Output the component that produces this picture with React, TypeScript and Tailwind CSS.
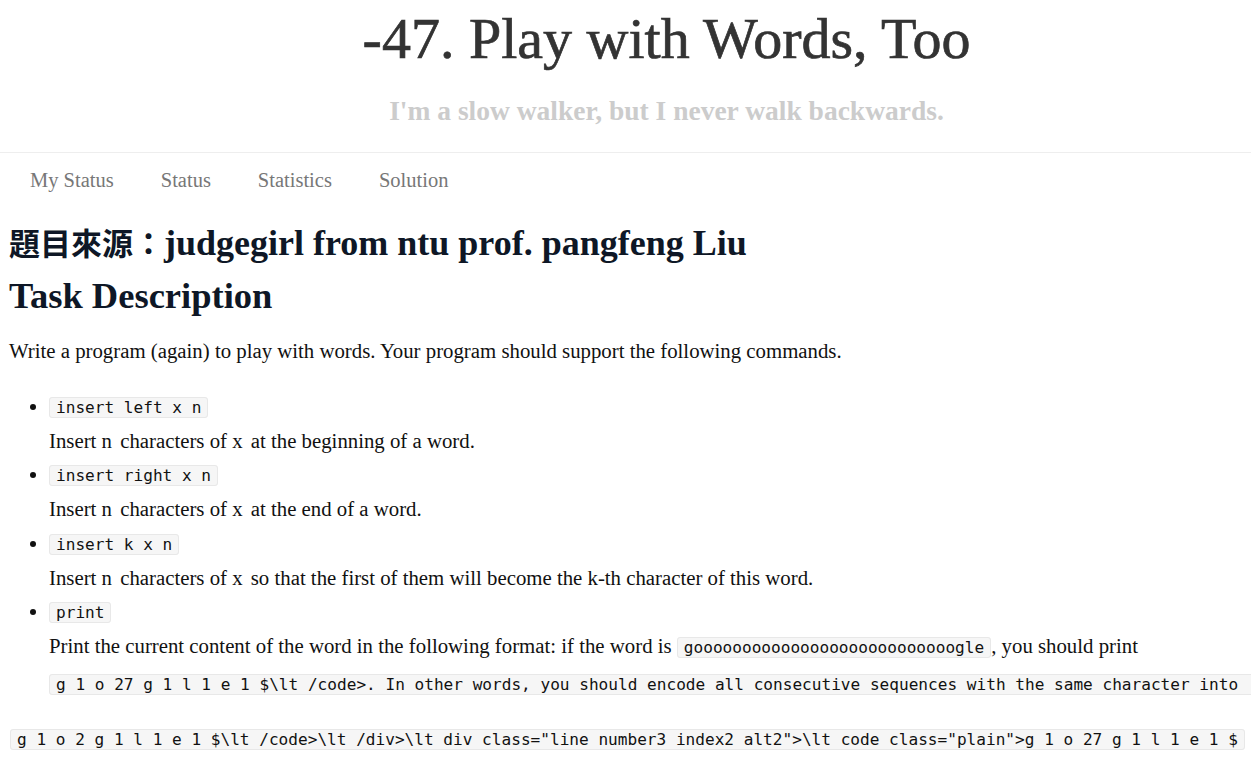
import React from "react";

const Code = ({ children }: { children: React.ReactNode }) => (
  <code className="whitespace-pre rounded-[3px] border border-[#e8e8e8] bg-[#f6f6f6] px-[6px] font-['DejaVu_Sans_Mono',monospace] text-[16.1px] text-[#111]">
    {children}
  </code>
);

const V = ({ children }: { children: React.ReactNode }) => (
  <span className="mr-[3px]">{children}</span>
);

const google = "g" + "o".repeat(27) + "gle";

export default function App() {
  return (
    <div className="h-[759px] w-[1251px] overflow-hidden bg-white font-['Liberation_Serif','Noto_Sans_CJK_TC',serif] text-[#111]">
      <header className="pl-[82px] text-center">
        <h1 className="pt-[10px] text-[58px] leading-[58px] text-[#333] [-webkit-text-stroke:0.7px_#333]">
          -47. Play with Words, Too
        </h1>
        <p className="mt-[29px] text-[27.5px] font-bold leading-[27.5px] text-[#ccc]">
          I'm a slow walker, but I never walk backwards.
        </p>
      </header>
      <div className="mt-[27px] h-px bg-[#eee]" />
      <nav className="flex gap-[47px] pl-[30px] pt-[17px] text-[20.5px] leading-[20.5px] text-[#777]">
        <span>My Status</span>
        <span>Status</span>
        <span>Statistics</span>
        <span>Solution</span>
      </nav>
      <main className="px-[9px]">
        <h2 className="mt-[35px] h-[36px] whitespace-nowrap text-[36px] font-bold leading-[36px] text-[#0e1726]">
          <span className="font-['Noto_Sans_CJK_TC',sans-serif] text-[31px] leading-[0px]">題目來源：</span>
          judgegirl from ntu prof. pangfeng Liu
        </h2>
        <h2 className="mt-[17px] h-[36px] text-[36.5px] font-bold leading-[36px] text-[#0e1726]">Task Description</h2>
        <p className="mt-[27px] text-[20.8px] leading-[20.8px]">
          Write a program (again) to play with words. Your program should support the following commands.
        </p>
        <ul className="mt-[27px] list-disc pl-[40px] text-[20.8px] leading-[34px]">
          <li>
            <div>
              <Code>insert left x n</Code>
            </div>
            <div className="leading-[32.5px]">
              Insert <V>n</V> characters of <V>x</V> at the beginning of a word.
            </div>
          </li>
          <li>
            <div>
              <Code>insert right x n</Code>
            </div>
            <div className="leading-[32.5px]">
              Insert <V>n</V> characters of <V>x</V> at the end of a word.
            </div>
          </li>
          <li>
            <div>
              <Code>insert k x n</Code>
            </div>
            <div className="leading-[32.5px]">
              Insert <V>n</V> characters of <V>x</V> so that the first of them will become the k-th character of this word.
            </div>
          </li>
          <li>
            <div>
              <Code>print</Code>
            </div>
            <div className="leading-[32.5px]">
              <span className="whitespace-nowrap">
                Print the current content of the word in the following format: if the word is{" "}
                <Code>{google}</Code>, you should print
              </span>
            </div>
            <div className="mt-[1px] whitespace-nowrap">
              <Code>
                g 1 o 27 g 1 l 1 e 1 $\lt /code{">"}. In other words, you should encode all consecutive sequences with the same character into  a character and a number.
              </Code>
            </div>
          </li>
        </ul>
        <div className="mt-[19px] whitespace-nowrap pl-[1px] text-[20.8px] leading-[34px]">
          <Code>
            g 1 o 2 g 1 l 1 e 1 $\lt /code{">"}\lt /div{">"}\lt div class="line number3 index2 alt2"{">"}\lt code class="plain"{">"}g 1 o 27 g 1 l 1 e 1 $
          </Code>
        </div>
      </main>
    </div>
  );
}
